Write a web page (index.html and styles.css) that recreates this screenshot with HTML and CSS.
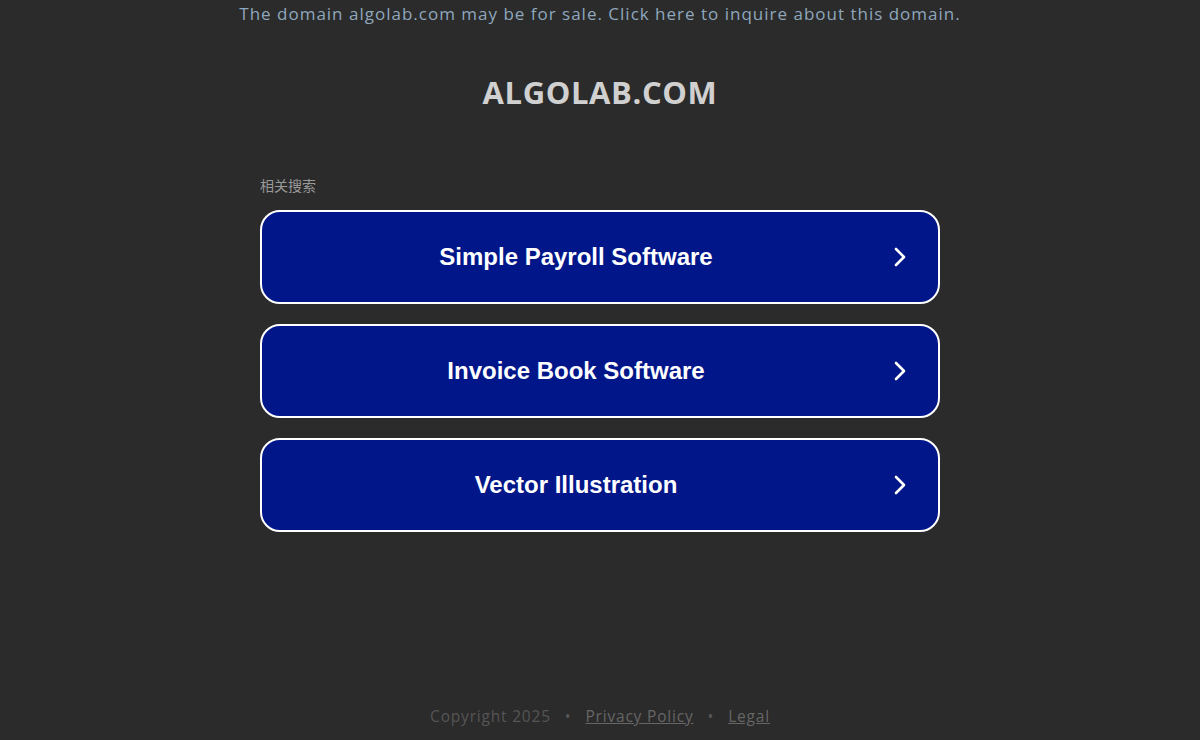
FILE: index.html
```
<!DOCTYPE html>
<html>
<head>
<meta charset="utf-8">
<link rel="stylesheet" href="styles.css">
</head>
<body>
<div class="page">
  <div class="banner">The domain algolab.com may be for sale. Click here to inquire about this domain.</div>
  <h1 class="title">ALGOLAB.COM</h1>
  <div class="related">
    <div class="label">相关搜索</div>
    <a class="btn" href="#"><span>Simple Payroll Software</span><svg class="chev" viewBox="0 0 16 24" width="16" height="24"><path d="M4 4 L12 12 L4 20" fill="none" stroke="#fff" stroke-width="2.6" stroke-linecap="round" stroke-linejoin="round"/></svg></a>
    <a class="btn" href="#"><span>Invoice Book Software</span><svg class="chev" viewBox="0 0 16 24" width="16" height="24"><path d="M4 4 L12 12 L4 20" fill="none" stroke="#fff" stroke-width="2.6" stroke-linecap="round" stroke-linejoin="round"/></svg></a>
    <a class="btn" href="#"><span>Vector Illustration</span><svg class="chev" viewBox="0 0 16 24" width="16" height="24"><path d="M4 4 L12 12 L4 20" fill="none" stroke="#fff" stroke-width="2.6" stroke-linecap="round" stroke-linejoin="round"/></svg></a>
  </div>
  <div class="footer">
    <span>Copyright 2025</span><span class="dot">•</span><a href="#">Privacy Policy</a><span class="dot">•</span><a href="#">Legal</a>
  </div>
</div>
</body>
</html>
```
FILE: styles.css
```
html, body {
  margin: 0;
  padding: 0;
  background: #2b2b2b;
}
.page {
  height: 740px;
  display: flex;
  flex-direction: column;
  align-items: center;
  font-family: "Open Sans", "DejaVu Sans", sans-serif;
}
.banner {
  margin-top: 3px;
  font-size: 17px;
  line-height: 22px;
  color: #8fa7bd;
  letter-spacing: 1px;
}
.title {
  margin: 49px 0 0;
  font-size: 31px;
  line-height: 36px;
  font-weight: 700;
  color: #d0d0d0;
  letter-spacing: 0.6px;
}
.related {
  width: 680px;
  margin-top: 66px;
  display: flex;
  flex-direction: column;
  gap: 20px;
}
.label {
  font-family: "Noto Sans CJK SC", sans-serif;
  font-size: 14px;
  line-height: 19px;
  color: #999;
  margin-bottom: -5px;
}
.btn {
  position: relative;
  height: 90px;
  box-sizing: content-box;
  border: 2px solid #fff;
  border-radius: 20px;
  background: #001689;
  display: flex;
  align-items: center;
  justify-content: center;
  text-decoration: none;
  color: #fff;
  font-family: "Liberation Sans", Arial, sans-serif;
  font-weight: 700;
  font-size: 24px;
}
.btn span {
  margin-right: 48px;
}
.chev {
  position: absolute;
  right: 30px;
  top: 33px;
}
.footer {
  margin-top: auto;
  margin-bottom: 14px;
  font-size: 15.5px;
  line-height: 20px;
  color: #555;
  letter-spacing: 0.8px;
  display: flex;
}
.footer a {
  color: #666;
  text-decoration: underline;
}
.dot {
  margin: 0 14px;
}
```
